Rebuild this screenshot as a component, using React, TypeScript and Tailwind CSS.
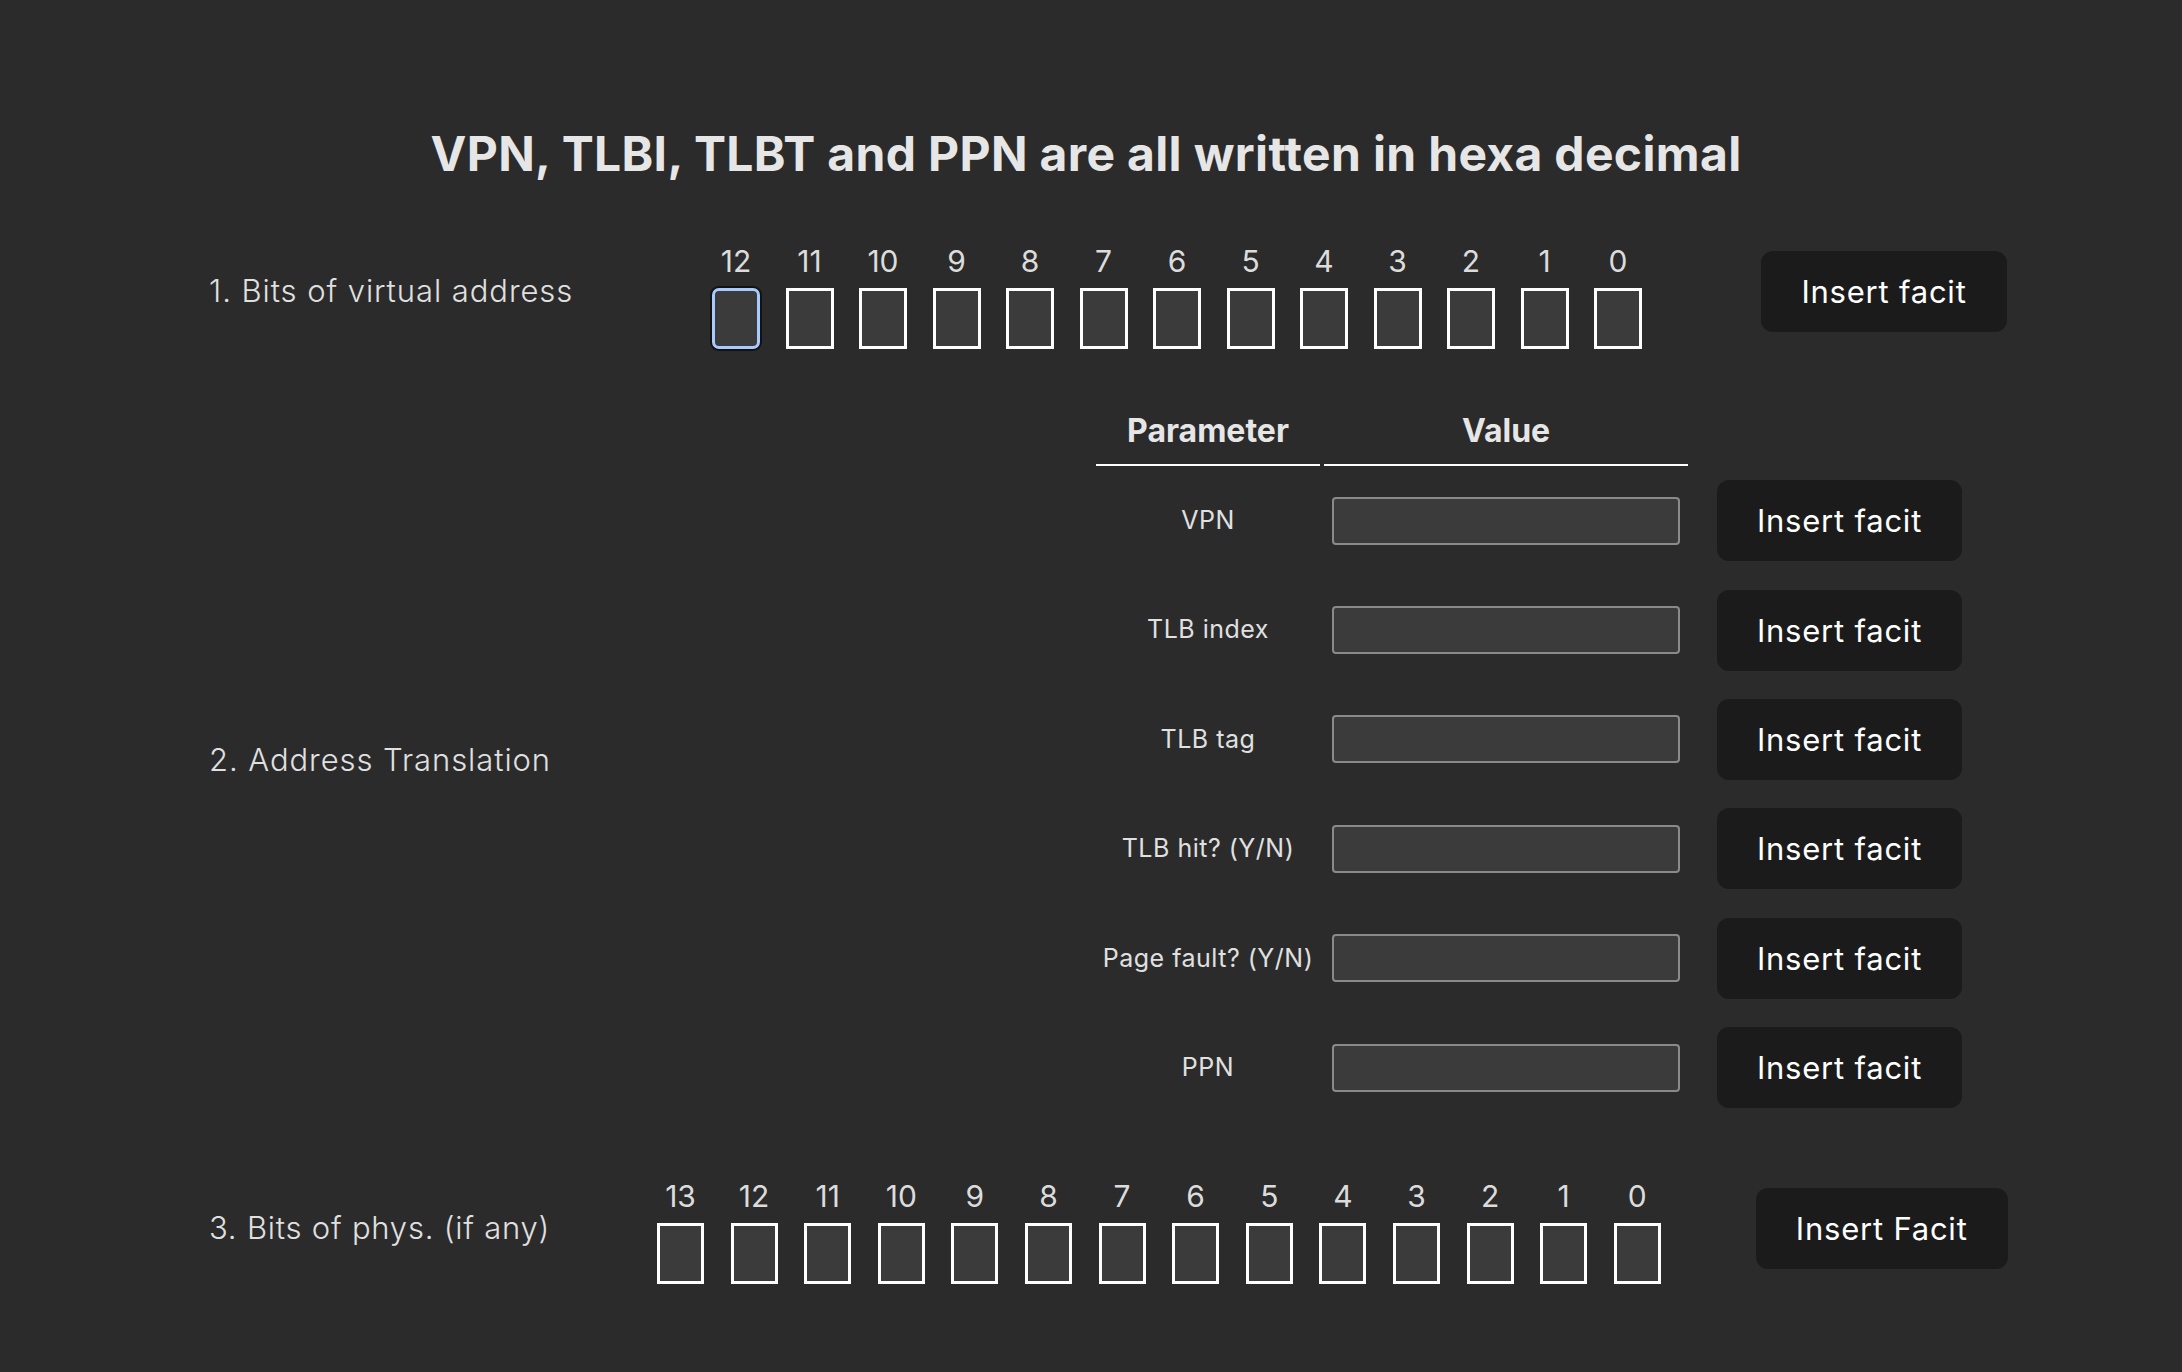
import React from 'react';

const vaBits = [12, 11, 10, 9, 8, 7, 6, 5, 4, 3, 2, 1, 0];
const paBits = [13, 12, 11, 10, 9, 8, 7, 6, 5, 4, 3, 2, 1, 0];

const params = ['VPN', 'TLB index', 'TLB tag', 'TLB hit? (Y/N)', 'Page fault? (Y/N)', 'PPN'];

const FacitButton: React.FC<{ label: string; className?: string }> = ({ label, className = '' }) => (
    <button
        className={`h-[81px] shrink-0 rounded-[12px] bg-[#1b1b1b] text-[31px] leading-none tracking-[0.025em] text-white ${className}`}
    >
        {label}
    </button>
);

const BitRow: React.FC<{ bits: number[]; gap: string; boxW: string }> = ({ bits, gap, boxW }) => (
    <div className={`flex ${gap}`}>
        {bits.map((b, idx) => (
            <div key={b} className="flex flex-col items-center">
                <span className="text-[30px] leading-[36px] text-[#dcdcdc]">{b}</span>
                <div
                    className={`mt-[9px] h-[61px] ${boxW} bg-[#3b3b3b] ${
                        idx === 0 && bits.length === 13
                            ? 'rounded-[7px] border-[3px] border-[#a8cbff] shadow-[0_0_0_2px_#121212]'
                            : 'border-[3px] border-white'
                    }`}
                />
            </div>
        ))}
    </div>
);

export default function App() {
    return (
        <div className="min-h-screen w-full bg-[#2b2b2b] font-['Inter',sans-serif] text-[#e4e4e4]">
            <h1 className="pr-[10px] pt-[125px] text-center text-[48px] font-bold leading-[58px] tracking-[0.007em] text-[#e6e6e6]">
                VPN, TLBI, TLBT and PPN are all written in hexa decimal
            </h1>

            {/* 1. virtual address bits */}
            <div className="mt-[51px] flex items-center pl-[209px]">
                <div className="w-[503px] text-[31px] font-light tracking-[0.03em] text-[#e0e0e0]">
                    1. Bits of virtual address
                </div>
                <div className="mt-[9px]">
                    <BitRow bits={vaBits} gap="gap-[25.5px]" boxW="w-[48px]" />
                </div>
                <FacitButton label="Insert facit" className="ml-[119px] w-[246px]" />
            </div>

            {/* 2. address translation */}
            <div className="mt-[62px] flex items-center pl-[209px]">
                <div className="-mt-3 w-[887px] text-[31px] font-light tracking-[0.03em] text-[#e0e0e0]">
                    2. Address Translation
                </div>
                <div className="flex flex-col">
                    <div className="flex gap-[4px]">
                        <div className="w-[224px] border-b-2 border-white pb-[13px] text-center text-[32px] font-bold leading-[40px] text-[#e6e6e6]">
                            Parameter
                        </div>
                        <div className="w-[364px] border-b-2 border-white pb-[13px] text-center text-[32px] font-bold leading-[40px] text-[#e6e6e6]">
                            Value
                        </div>
                    </div>
                    {params.map((p) => (
                        <div key={p} className="flex h-[109.4px] items-center">
                            <div className="w-[224px] whitespace-nowrap text-center text-[25px] tracking-[0.02em] text-[#e0e0e0]">
                                {p}
                            </div>
                            <div className="ml-[4px] w-[364px] px-[8px]">
                                <input
                                    className="h-[48px] w-full rounded-[4px] border-2 border-[#8a8a8a] bg-[#3b3b3b] outline-none"
                                    type="text"
                                />
                            </div>
                            <FacitButton label="Insert facit" className="ml-[29px] w-[245px]" />
                        </div>
                    ))}
                </div>
            </div>

            {/* 3. physical address bits */}
            <div className="mt-[50px] flex items-center pb-[80px] pl-[209px]">
                <div className="w-[448px] text-[31px] font-light tracking-[0.025em] text-[#e0e0e0]">
                    3. Bits of phys. (if any)
                </div>
                <div className="mt-[6px]">
                    <BitRow bits={paBits} gap="gap-[26.6px]" boxW="w-[47px]" />
                </div>
                <FacitButton label="Insert Facit" className="ml-[95px] w-[252px]" />
            </div>
        </div>
    );
}
